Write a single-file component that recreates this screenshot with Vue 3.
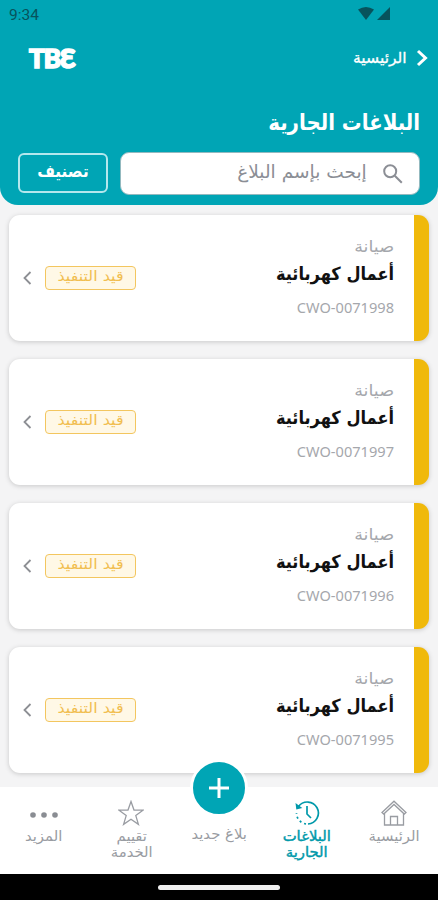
<template>
  <div class="screen" dir="rtl">
    <header class="header">
      <div class="status-bar">
        <div class="status-icons">
          <svg width="18" height="14" viewBox="0 0 18 14"><path d="M1 2.6Q9-2.4 17 2.6L9 13Z" /></svg>
          <svg width="13" height="14" viewBox="0 0 13 14"><path d="M13 0V13H0Z" /></svg>
        </div>
        <span class="time">9:34</span>
      </div>
      <div class="nav-row">
        <div class="back">
          <svg width="12" height="18" viewBox="0 0 12 18"><path d="M2 2l7.5 7L2 16" /></svg>
          <span>الرئيسية</span>
        </div>
        <div class="logo" dir="ltr">TBƐ</div>
      </div>
      <h1>البلاغات الجارية</h1>
      <div class="search-row">
        <div class="search">
          <svg width="22" height="22" viewBox="0 0 22 22">
            <circle cx="8.2" cy="8.2" r="6" />
            <path d="M12.8 12.8l7 7" />
          </svg>
          <span>إبحث بإسم البلاغ</span>
        </div>
        <button class="filter"><span>تصنيف</span></button>
      </div>
    </header>

    <main class="list">
      <article v-for="report in reports" :key="report" class="card">
        <div class="info">
          <div class="category">صيانة</div>
          <h2>أعمال كهربائية</h2>
          <div class="code" dir="ltr">{{ report }}</div>
        </div>
        <div class="state">
          <span class="badge"><span>قيد التنفيذ</span></span>
          <svg width="9" height="14" viewBox="0 0 9 14"><path d="M7.5 1L1.5 7l6 6" /></svg>
        </div>
      </article>
    </main>

    <nav class="tabs">
      <div class="tab home">
        <svg width="26" height="26" viewBox="0 0 26 26">
          <path d="M1 12.5L13 1.2 25 12.5 23.3 14 13 4.5 2.7 14ZM3.5 13.5V25H22.5V13.5M9.5 25v-8.5h7V25" />
        </svg>
        <span>الرئيسية</span>
      </div>
      <div class="tab active">
        <svg width="26" height="26" viewBox="0 0 26 26">
          <path d="M4.5 6.5A11 11 0 1 1 14 24M13 6v8l4 4" />
          <path class="arrow" d="M1.5 3l.8 6.5 6-1.5Z" />
          <path class="dots" d="M12 24A11 11 0 0 1 2.5 13" />
        </svg>
        <span>البلاغات<br>الجارية</span>
      </div>
      <div class="tab new">
        <div class="fab">
          <svg width="22" height="22" viewBox="0 0 22 22"><path d="M11 1v20M1 11h20" /></svg>
        </div>
        <span>بلاغ جديد</span>
      </div>
      <div class="tab rate">
        <svg width="26" height="26" viewBox="0 0 26 26">
          <path d="M13 1.5l3 8.5 9 .2-7.2 5.4 2.6 8.8L13 19.2l-7.4 5.2 2.6-8.8L1 10.2l9-.2Z" />
        </svg>
        <span>تقييم<br>الخدمة</span>
      </div>
      <div class="tab more">
        <svg width="30" height="26" viewBox="0 0 30 26">
          <circle cx="4" cy="15" r="2.8" /><circle cx="15" cy="15" r="2.8" /><circle cx="26" cy="15" r="2.8" />
        </svg>
        <span>المزيد</span>
      </div>
    </nav>
    <footer class="system-bar"><i></i></footer>
  </div>
</template>

<script setup>
const reports = ['CWO-0071998', 'CWO-0071997', 'CWO-0071996', 'CWO-0071995']
</script>

<style>
body {
  margin: 0;
  overflow: hidden;
}
</style>

<style scoped>
* {
  box-sizing: border-box;
}
svg {
  display: block;
  flex: none;
  fill: none;
  stroke: currentColor;
}
.screen {
  width: 438px;
  height: 900px;
  overflow: hidden;
  display: flex;
  flex-direction: column;
  background: #f4f4f5;
  font-family: 'DejaVu Sans', sans-serif;
  white-space: nowrap;
}
.header {
  height: 205px;
  flex: none;
  padding: 0 18px;
  background: #00a5b5;
  border-radius: 0 0 18px 18px;
  color: #fff;
}
.status-bar {
  height: 28px;
  display: flex;
  align-items: center;
  justify-content: space-between;
  margin: 0 -9px;
  color: #07535c;
}
.status-icons {
  display: flex;
  flex-direction: row-reverse;
  gap: 2px;
  margin-right: 39px;
}
.status-icons svg {
  fill: currentColor;
  stroke: none;
}
.time {
  padding-top: 2px;
  font: 15.5px Roboto, sans-serif;
}
.nav-row {
  height: 62px;
  display: flex;
  align-items: center;
  justify-content: space-between;
}
.back {
  display: flex;
  align-items: center;
  gap: 9px;
  margin: -2px -8px 0 0;
  font-size: 15px;
}
.back span {
  line-height: 16px;
  transform: scaleX(1.04);
  transform-origin: right;
  -webkit-text-stroke: 0.3px currentColor;
}
.back svg {
  stroke-width: 3;
}
.logo {
  margin: -2px 0 0 11px;
  font: 900 26px/30px Lato, sans-serif;
  letter-spacing: -1px;
  -webkit-text-stroke: 1.6px currentColor;
}
h1 {
  margin: 16px 0 0;
  font: bold 22px/34px 'DejaVu Sans Condensed', 'DejaVu Sans', sans-serif;
  font-stretch: condensed;
}
.search-row {
  display: flex;
  gap: 12px;
  margin-top: 12px;
}
.search {
  width: 301px;
  height: 43px;
  display: flex;
  align-items: center;
  gap: 15px;
  padding: 0 15px;
  border: 1px solid #93b9bf;
  border-radius: 9px;
  background: #fff;
  color: #8b8e95;
  font-size: 18px;
}
.search span {
  margin-top: -5px;
  transform: scaleX(1.03);
  transform-origin: right;
}
.search svg {
  stroke-width: 2;
}
.filter {
  width: 90px;
  height: 40px;
  margin-top: 1px;
  padding-bottom: 6px;
  border: 2px solid #b4e7ed;
  border-radius: 6px;
  background: none;
  color: #fff;
  font: bold 17px 'DejaVu Sans Condensed', 'DejaVu Sans', sans-serif;
  font-stretch: condensed;
}
.list {
  height: 582px;
  flex: none;
  display: flex;
  flex-direction: column;
  gap: 18px;
  padding: 10px 9px 0;
}
.card {
  height: 126px;
  flex: none;
  display: flex;
  justify-content: space-between;
  padding: 21px 20px 0 14px;
  border-right: 15px solid #f0b90b;
  border-radius: 11px;
  background: #fff;
  box-shadow: 0 1px 5px rgba(0, 0, 0, 0.18);
}
.category {
  color: #a5a7ac;
  font-size: 16px;
  line-height: 22px;
  transform: scaleX(1.1);
  transform-origin: right;
}
h2 {
  margin: 2px 0 0;
  color: #111;
  font: bold 18px/28px 'DejaVu Sans Condensed', 'DejaVu Sans', sans-serif;
  font-stretch: condensed;
}
.code {
  margin-top: 8px;
  color: #a5a7ac;
  font: 14.6px/22px 'Noto Sans', sans-serif;
  text-align: right;
}
.state {
  height: 24px;
  display: flex;
  align-items: center;
  gap: 13px;
  margin-top: 30px;
  color: #8d8f94;
}
.state svg {
  stroke-width: 1.8;
}
.badge {
  width: 91px;
  height: 24px;
  border: 1px solid #f3c65f;
  border-radius: 4px;
  background: #fff8e6;
  color: #f1be50;
  font-size: 14.5px;
  line-height: 19px;
  text-align: center;
}
.badge span {
  display: block;
  transform: scaleX(1.1);
}
.tabs {
  position: relative;
  height: 87px;
  flex: none;
  display: flex;
  background: #fff;
  color: #999ca2;
}
.tab {
  width: 87.6px;
  display: flex;
  flex-direction: column;
  align-items: center;
  padding-top: 13px;
  font-size: 14px;
  line-height: 16px;
  text-align: center;
}
.tab > span {
  margin-top: -1px;
  transform: scaleX(1.06);
}
.tab svg {
  stroke-width: 1.3;
  margin-bottom: 3px;
}
.active {
  color: #0099aa;
}
.active > span {
  -webkit-text-stroke: 0.4px currentColor;
}
.tab.active svg {
  stroke-width: 1.7;
}
.tab .arrow {
  fill: currentColor;
  stroke: none;
}
.dots {
  stroke-dasharray: 2 3;
}
.fab {
  width: 58px;
  height: 58px;
  display: grid;
  place-items: center;
  margin-top: -41px;
  margin-bottom: 10px;
  border: 3px solid #fff;
  border-radius: 50%;
  background: #00a5b5;
  color: #fff;
}
.tab .fab svg {
  margin: 0;
  stroke-width: 3;
}
.more svg {
  fill: #8a8d93;
  stroke: none;
}
.system-bar {
  height: 26px;
  display: grid;
  place-items: center;
  background: #000;
}
.system-bar i {
  width: 122px;
  height: 5px;
  border-radius: 3px;
  background: #eee;
}
</style>
